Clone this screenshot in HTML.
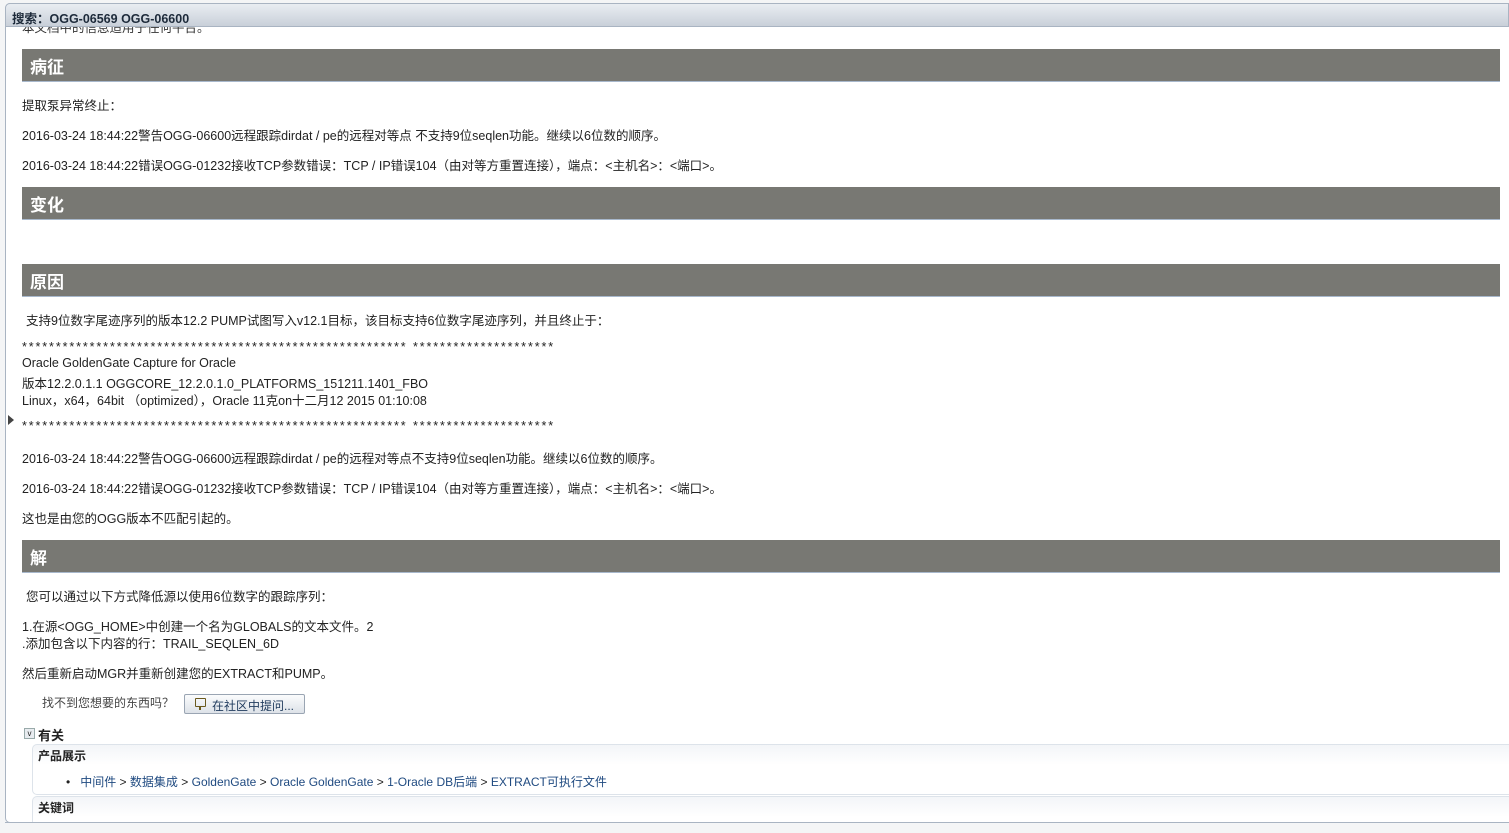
<!DOCTYPE html>
<html><head><meta charset="utf-8"><style>
*{margin:0;padding:0;box-sizing:border-box}
body{width:1509px;height:833px;background:#f4f5f6;font-family:"Liberation Sans","Noto Sans CJK SC",sans-serif;font-size:12.5px;color:#222;position:relative;overflow:hidden}
.title{position:absolute;left:5px;top:3px;width:1504px;height:24px;background:linear-gradient(#e9edf2,#c9d0d9);border:1px solid #a9b4c2;border-radius:5px 0 0 0;font-weight:bold;font-size:12.5px;color:#1d2a3a;padding:4px 0 0 6px}
.panel{position:absolute;left:5px;top:3px;width:1520px;height:820px;background:#fff;border:1px solid #a9b4c2;border-radius:5px}
.t{position:absolute;white-space:nowrap}
.h{position:absolute;left:22px;width:1478px;height:33px;background:#787873;color:#fff;font-weight:bold;font-size:17px;padding:4px 0 0 8px;border-bottom:1px solid #a8b8cc}
a{color:#1f4a80;text-decoration:none}
.st{letter-spacing:1.9px}
</style></head><body>
<div class="panel"></div>
<div class="t" style="left:22px;top:17px;color:#333">本文档中的信息适用于任何平台。</div>
<div class="title">搜索：OGG-06569 OGG-06600</div>
<div class="h" style="top:49px">病征</div>
<div class="t" style="left:22px;top:95px">提取泵异常终止：</div>
<div class="t" style="left:22px;top:125px">2016-03-24 18:44:22警告OGG-06600远程跟踪dirdat / pe的远程对等点 不支持9位seqlen功能。继续以6位数的顺序。</div>
<div class="t" style="left:22px;top:155px">2016-03-24 18:44:22错误OGG-01232接收TCP参数错误：TCP / IP错误104（由对等方重置连接），端点：&lt;主机名&gt;：&lt;端口&gt;。</div>
<div class="h" style="top:187px">变化</div>
<div class="h" style="top:264px">原因</div>
<div class="t" style="left:26px;top:310px">支持9位数字尾迹序列的版本12.2 PUMP试图写入v12.1目标，该目标支持6位数字尾迹序列，并且终止于：</div>
<div class="t st" style="left:22px;top:340px">********************************************************* *********************</div>
<div class="t" style="left:22px;top:356px">Oracle GoldenGate Capture for Oracle</div>
<div class="t" style="left:22px;top:373px">版本12.2.0.1.1 OGGCORE_12.2.0.1.0_PLATFORMS_151211.1401_FBO</div>
<div class="t" style="left:22px;top:390px">Linux，x64，64bit （optimized），Oracle 11克on十二月12 2015 01:10:08</div>
<div class="t st" style="left:22px;top:419px">********************************************************* *********************</div>
<div class="t" style="left:8px;top:410px;width:6px;height:20px;background:#444;clip-path:polygon(0 25%,100% 50%,0 75%)"></div>
<div class="t" style="left:22px;top:448px">2016-03-24 18:44:22警告OGG-06600远程跟踪dirdat / pe的远程对等点不支持9位seqlen功能。继续以6位数的顺序。</div>
<div class="t" style="left:22px;top:478px">2016-03-24 18:44:22错误OGG-01232接收TCP参数错误：TCP / IP错误104（由对等方重置连接），端点：&lt;主机名&gt;：&lt;端口&gt;。</div>
<div class="t" style="left:22px;top:508px">这也是由您的OGG版本不匹配引起的。</div>
<div class="h" style="top:540px">解</div>
<div class="t" style="left:26px;top:586px">您可以通过以下方式降低源以使用6位数字的跟踪序列：</div>
<div class="t" style="left:22px;top:616px">1.在源&lt;OGG_HOME&gt;中创建一个名为GLOBALS的文本文件。2</div>
<div class="t" style="left:22px;top:633px">.添加包含以下内容的行：TRAIL_SEQLEN_6D</div>
<div class="t" style="left:22px;top:663px">然后重新启动MGR并重新创建您的EXTRACT和PUMP。</div>
<div class="t" style="left:42px;top:694px;font-size:12px;color:#444">找不到您想要的东西吗？</div>
<div class="t" style="left:184px;top:694px;width:121px;height:20px;border:1px solid #9aa5b3;border-radius:2px;background:linear-gradient(#fbfcfd,#dde2e8);font-size:12px;padding:2px 0 0 27px;color:#1f3a5c">在社区中提问...</div>
<div class="t" style="left:195px;top:698px;width:11px;height:9px;border:1.5px solid #6b5a1e;border-radius:1px"></div>
<div class="t" style="left:199px;top:706px;width:2px;height:4px;background:#6b5a1e"></div>
<div class="t" style="left:24px;top:728px;width:11px;height:11px;border:1px solid #9aa;background:#e8ecf0;font-size:8px;line-height:9px;text-align:center">v</div>
<div class="t" style="left:38px;top:725px;font-weight:bold;font-size:13px">有关</div>
<div class="t" style="left:32px;top:744px;width:1490px;height:51px;border:1px solid #dde3ea;border-radius:5px;background:linear-gradient(#f3f5f8,#fff 20px)"></div>
<div class="t" style="left:38px;top:747px;font-weight:bold;font-size:12px">产品展示</div>
<div class="t" style="left:66px;top:773px;font-size:12px">•&nbsp;&nbsp;&nbsp;<a>中间件</a> &gt; <a>数据集成</a> &gt; <a>GoldenGate</a> &gt; <a>Oracle GoldenGate</a> &gt; <a>1-Oracle DB后端</a> &gt; <a>EXTRACT可执行文件</a></div>
<div class="t" style="left:32px;top:796px;width:1490px;height:30px;border:1px solid #dde3ea;border-bottom:none;border-radius:5px 5px 0 0;background:linear-gradient(#f3f5f8,#fff 20px)"></div>
<div class="t" style="left:38px;top:799px;font-weight:bold;font-size:12px">关键词</div>
<div class="t" style="left:5px;top:822px;width:1504px;height:11px;background:#f4f5f6;border-top:1px solid #a9b4c2"></div>
</body></html>
